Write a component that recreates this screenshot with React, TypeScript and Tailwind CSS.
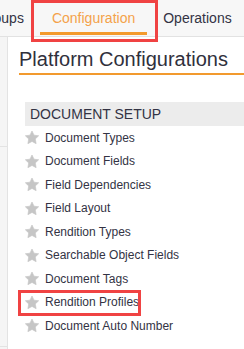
import React from "react";

const items = [
    "Document Types",
    "Document Fields",
    "Field Dependencies",
    "Field Layout",
    "Rendition Types",
    "Searchable Object Fields",
    "Document Tags",
    "Rendition Profiles",
    "Document Auto Number",
];

function Star() {
    return (
        <svg width="14" height="13" viewBox="1 1.5 22 20.5" className="shrink-0 ml-[-0.5px]">
            <polygon
                points="12,1.5 15.2,8.1 22.5,9 17.2,14 18.5,21.5 12,17.9 5.5,21.5 6.8,14 1.5,9 8.8,8.1"
                fill="#c6c6c6"
                stroke="#c6c6c6"
                strokeWidth="1"
                strokeLinejoin="round"
            />
        </svg>
    );
}

export default function App() {
    return <div className="w-[244px] h-[349px] overflow-hidden bg-white font-['Liberation_Sans',Arial,sans-serif] text-[#333344]">
        {/* tabs */}
        <div className="h-[37px] bg-[#f7f7f7] border-b border-[#e2e2e2] flex gap-1 text-[14px]">
            <div className="ml-[-34px] px-3 flex items-center whitespace-nowrap">Groups</div>
            <div className="relative px-3 flex items-center whitespace-nowrap text-[#f4a24a]">
                Configuration
                <span className="absolute left-0 right-0 bottom-[1px] h-[3px] bg-[#f39a2c]" />
                <span className="absolute left-[-9px] right-[-11px] top-0 h-[42px] border-[3px] border-[#f04343] z-10" />
            </div>
            <div className="px-3 flex items-center whitespace-nowrap">Operations</div>
        </div>

        <div className="flex">
            {/* side strip */}
            <div className="w-[8px] shrink-0 bg-[#f5f5f5] border-r border-[#e3e3e3] h-[312px]">
                <div className="h-[110px] border-b border-[#e3e3e3]" />
                <div className="h-[200px] border-b border-[#e3e3e3]" />
            </div>

            <div className="flex-1 pl-[11px] pt-2">
                <h1 className="text-[20px] leading-7 border-b-2 border-[#f29a2e] whitespace-nowrap text-[#30303c]">
                    Platform Configurations
                </h1>

                <div className="mt-[27px] ml-[6px] h-[24px] bg-[#ececec] pl-[5px] text-[14px] leading-[24px] whitespace-nowrap">
                    DOCUMENT SETUP
                </div>

                <ul className="ml-[6px] text-[12px]">
                    {items.map((label) => (
                        <li key={label} className="relative h-[23.5px] flex items-center whitespace-nowrap">
                            <Star />
                            <span className="ml-[6.5px]">{label}</span>
                            {label === "Rendition Profiles" && (
                                <span className="absolute left-[-7px] top-[-0.5px] w-[123px] h-[26px] border-[3px] border-[#f04343]" />
                            )}
                        </li>
                    ))}
                </ul>
            </div>
        </div>
    </div>;
}
